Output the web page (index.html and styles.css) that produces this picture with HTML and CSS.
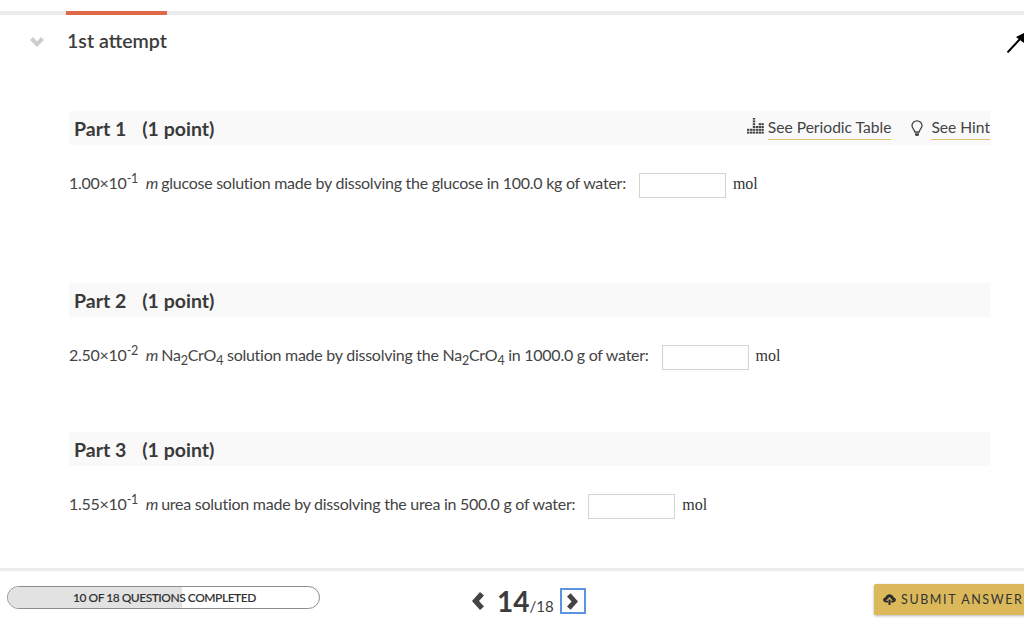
FILE: index.html
```html
<!DOCTYPE html>
<html lang="en">
<head>
<meta charset="utf-8">
<title>1st attempt</title>
<link rel="stylesheet" href="styles.css">
</head>
<body>
<div class="page">
  <div class="progress-top"><div class="progress-top-fill"></div></div>
  <div class="attempt">
    <svg class="chev" viewBox="0 0 14 10" width="14" height="10"><path d="M0 3 L3 0 L7 4.5 L11 0 L14 3 L7 10 Z" fill="#cdcdcd"/></svg>
    <h2 class="attempt-title">1st attempt</h2>
    <svg class="corner-arrow" viewBox="0 0 17 20" width="17" height="20"><path d="M0.5 19.5 L13 6" stroke="#000" stroke-width="2" fill="none"/><path d="M9 4 L17 0 L17 10 Z" fill="#000"/></svg>
  </div>
  <main class="parts">
    <section class="part part-1">
      <header class="part-head">
        <span class="part-name">Part 1</span><span class="part-pts">(1 point)</span>
        <div class="tools">
          <svg class="pt-icon" viewBox="0 0 17 16" width="17" height="16"><g fill="#444"><rect x="0" y="13.6" width="2.4" height="2"/><rect x="0" y="10.8" width="2.4" height="2"/><rect x="3" y="13.6" width="2.4" height="2"/><rect x="3" y="10.8" width="2.4" height="2"/><rect x="5.8" y="13.6" width="2.4" height="2"/><rect x="5.8" y="10.8" width="2.4" height="2"/><rect x="5.8" y="8" width="2.4" height="2"/><rect x="5.8" y="5.2" width="2.4" height="2"/><rect x="5.8" y="2.4" width="2.4" height="2"/><rect x="5.8" y="0" width="2.4" height="1.6"/><rect x="8.8" y="13.6" width="2.4" height="2"/><rect x="8.8" y="10.8" width="2.4" height="2"/><rect x="8.8" y="8" width="2.4" height="2"/><rect x="11.6" y="13.6" width="2.4" height="2"/><rect x="11.6" y="10.8" width="2.4" height="2"/><rect x="11.6" y="8" width="2.4" height="2"/><rect x="11.6" y="5.2" width="2.4" height="2"/><rect x="14.4" y="13.6" width="2.4" height="2"/><rect x="14.4" y="10.8" width="2.4" height="2"/><rect x="14.4" y="8" width="2.4" height="2"/><rect x="14.4" y="5.2" width="2.4" height="2"/></g></svg>
          <a class="tool-link">See Periodic Table</a>
          <svg class="hint-icon" viewBox="0 0 12 17" width="12" height="17"><path d="M3.8 12 C3.6 9.5 1 8.5 1 5.6 A5 4.8 0 0 1 11 5.6 C11 8.5 8.4 9.5 8.2 12 Z" fill="none" stroke="#444" stroke-width="1.3"/><path d="M4 13.3 H8 V15 L7 16 H5 L4 15 Z" fill="#444"/></svg>
          <a class="tool-link">See Hint</a>
        </div>
      </header>
      <p class="question">1.00×10<sup>-1</sup> <i class="molal">m</i>glucose solution made by dissolving the glucose in 100.0 kg of water:<input class="answer" type="text" aria-label="answer"><span class="unit">mol</span></p>
    </section>
    <section class="part part-2">
      <header class="part-head"><span class="part-name">Part 2</span><span class="part-pts">(1 point)</span></header>
      <p class="question">2.50×10<sup>-2</sup> <i class="molal">m</i>Na<sub>2</sub>CrO<sub>4</sub> solution made by dissolving the Na<sub>2</sub>CrO<sub>4</sub> in 1000.0 g of water:<input class="answer" type="text" aria-label="answer"><span class="unit">mol</span></p>
    </section>
    <section class="part part-3">
      <header class="part-head"><span class="part-name">Part 3</span><span class="part-pts">(1 point)</span></header>
      <p class="question">1.55×10<sup>-1</sup> <i class="molal">m</i>urea solution made by dissolving the urea in 500.0 g of water:<input class="answer" type="text" aria-label="answer"><span class="unit">mol</span></p>
    </section>
  </main>
  <footer class="footer">
    <div class="completed"><div class="completed-fill"></div><span class="completed-text">10 OF 18 QUESTIONS COMPLETED</span></div>
    <nav class="pager">
      <svg class="pg-arrow" viewBox="0 0 12 18" width="12" height="18"><path d="M8 0 L0 9 L8 18 L12 14.5 L7 9 L12 3.5 Z" fill="#444"/></svg>
      <span class="pg-now">14</span><span class="pg-total">/18</span>
      <span class="pg-next"><svg viewBox="0 0 12 18" width="11" height="17"><path d="M4 0 L12 9 L4 18 L0 14.5 L5 9 L0 3.5 Z" fill="#444"/></svg></span>
    </nav>
    <button class="submit" type="button"><svg viewBox="0 0 14 12" width="13" height="11"><path d="M3.5 9.2 C1.5 9.2 0 7.9 0 6.2 C0 4.8 1 3.9 2.4 3.7 C2.9 1.6 4.8 0.2 7 0.2 C9.2 0.2 11.1 1.6 11.6 3.7 C13 3.9 14 4.8 14 6.2 C14 7.9 12.5 9.2 10.5 9.2 Z" fill="#2e2e2e"/><path d="M7 3.4 L10.8 7.4 H8.4 V9.6 H5.6 V7.4 H3.2 Z" fill="#dbb95a"/><rect x="5.9" y="6" width="2.2" height="6" fill="#2e2e2e"/></svg>SUBMIT ANSWER</button>
  </footer>
</div>
</body>
</html>
```
FILE: styles.css
```css
* { box-sizing: border-box; }
html, body { margin: 0; padding: 0; background: #fff; }
body { font-family: Lato, "Liberation Sans", sans-serif; color: #3c3c3c; }
.page { width: 1024px; height: 625px; overflow: hidden; display: flex; flex-direction: column; padding-top: 11px; }
.progress-top { height: 4px; background: #ececec; flex: none; }
.progress-top-fill { width: 101px; height: 4px; margin-left: 66px; background: #e0694a; }
.attempt { height: 96px; flex: none; display: flex; align-items: flex-start; position: relative; }
.chev { margin: 22px 0 0 30px; flex: none; }
.attempt-title { margin: 13px 0 0 23px; font-size: 19.6px; line-height: 26px; font-weight: 600; color: #3c3c3c; }
.corner-arrow { position: absolute; right: 0; top: 18px; }
.parts { flex: 1; padding: 0 34px 0 69px; }
.part-head { height: 34px; background: #f9f9f9; display: flex; align-items: center; padding-left: 5px; }
.part-name { font-weight: 700; font-size: 19.5px; line-height: 32px; margin-top: 2px; color: #3a3a3a; }
.part-pts { font-weight: 700; font-size: 19.5px; line-height: 32px; margin-top: 2px; color: #3a3a3a; margin-left: 16px; }
.tools { margin-left: auto; display: flex; align-items: center; height: 34px; font-size: 15.6px; }
.tool-link { border-bottom: 1px solid #e3bf66; line-height: 19px; height: 22px; margin-top: 1px; color: #444; }
.pt-icon { margin-right: 4px; margin-top: -4px; }
.hint-icon { margin: 0 8px 0 20px; }
.question { margin: 26px 0 0; font-size: 16px; letter-spacing: -0.26px; line-height: 24px; color: #444; height: 24px; white-space: nowrap; }
.question sup { font-size: 12.5px; line-height: 0; vertical-align: 6px; }
.question sub { font-size: 12.5px; line-height: 0; vertical-align: -4px; }
.molal { margin-left: 4px; margin-right: 3px; }
.answer { width: 87px; height: 25px; margin: 0 0 0 13px; padding: 0; border: 1px solid #d4d4d4; background: #fff; vertical-align: -1px; box-shadow: inset 0 0 1px #eee; }
.unit { font-family: "Liberation Serif", serif; font-size: 16px; letter-spacing: 0; color: #333; margin-left: 7px; }
.part-1 { height: 172px; }
.part-2 { height: 149px; }
.footer { height: 57px; flex: none; border-top: 3px solid #ececec; display: flex; align-items: flex-start; position: relative; }
.completed { position: relative; width: 313px; height: 23px; margin: 15px 0 0 7px; border: 1px solid #8c8c8c; border-radius: 12px; overflow: hidden; background: #fff; flex: none; }
.completed-fill { width: 174px; height: 100%; background: #e2e2e2; }
.completed-text { position: absolute; left: 65px; top: 0; line-height: 21px; font-size: 12px; font-weight: 600; letter-spacing: -0.48px; color: #333; white-space: nowrap; }
.pager { position: absolute; left: 472px; top: 16px; display: flex; align-items: flex-start; }
.pg-arrow { margin-top: 5px; }
.pg-now { font-size: 28px; line-height: 28px; font-weight: 700; margin-left: 13px; color: #3c3c3c; }
.pg-total { font-size: 15px; line-height: 18px; margin-top: 10px; color: #3c3c3c; }
.pg-next { width: 26px; height: 26px; margin: 1px 0 0 6px; border: 2px solid #5e93e0; display: flex; align-items: center; justify-content: center; }
.submit { position: absolute; left: 874px; top: 13px; width: 160px; height: 31px; border: 0; border-radius: 2px; padding: 0 0 0 9px; background: #dbb95a; box-shadow: 0 1px 3px rgba(0,0,0,.3); display: flex; align-items: center; justify-content: flex-start; gap: 5px; font-family: Lato, sans-serif; font-size: 12.5px; letter-spacing: 1.6px; color: #333; white-space: nowrap; }
```
